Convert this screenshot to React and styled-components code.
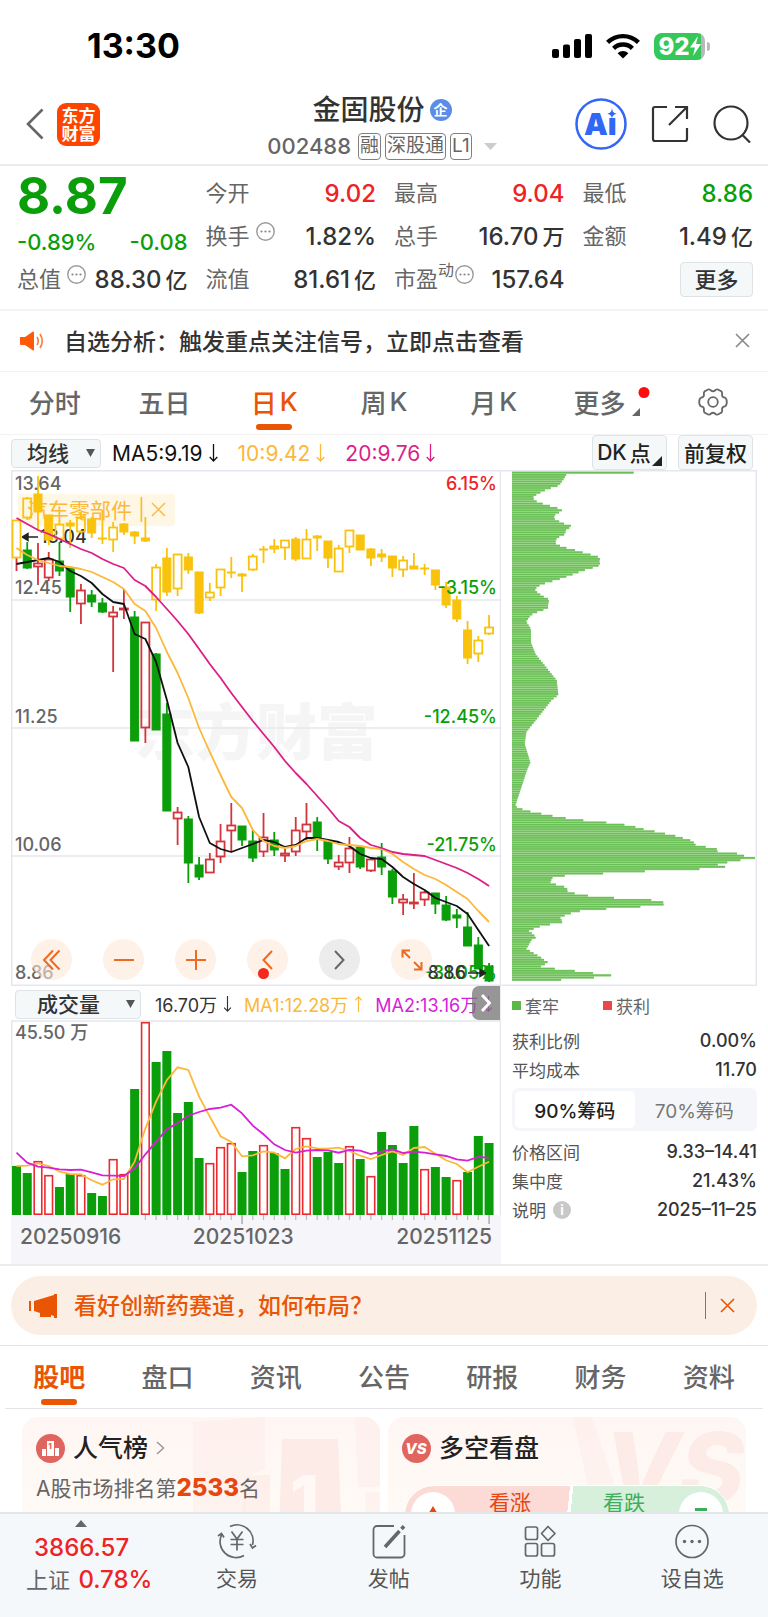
import React from "react";
import styled, { createGlobalStyle, css } from "styled-components";

const Global = createGlobalStyle`
  * { box-sizing: border-box; }
  html, body { margin: 0; background: #fff; }
  body, button, select {
    font-family: Inter, "Noto Sans CJK SC", sans-serif;
    color: #333;
  }
  button, select { border: 0; background: none; padding: 0; margin: 0; font-size: inherit; cursor: pointer; }
  button { display: flex; align-items: center; justify-content: center; }
  a { text-decoration: none; color: inherit; }
  svg { display: block; flex: none; }
`;

const C = {
  orange: "#ea5504",
  red: "#ee2326",
  green: "#0a9e0a",
  grey: "#666",
  ink: "#333",
  gold: "#fbb83a",
  pink: "#dc1f87",
  purple: "#d61fd6",
  line: "#ececee",
  soft: "#f4f8f9",
};

const Shell = styled.div`
  height: 100vh;
  display: flex;
  flex-direction: column;
  overflow: hidden;
`;
const Content = styled.main`
  flex: 1;
  min-height: 0;
  overflow: hidden;
`;

/* ---------- status bar ---------- */
const StatusBar = styled.div`
  height: 84px;
  padding: 8px 58px 0 87px;
  display: flex;
  align-items: center;
  justify-content: space-between;
`;
const Clock = styled.div`
  font-size: 34px;
  line-height: 40px;
  font-weight: 700;
  color: #000;
`;
const StatusIcons = styled.div`
  display: flex;
  align-items: center;
  gap: 13px;
`;
const Battery = styled.div`
  display: flex;
  align-items: center;
  gap: 2px;
`;
const BatteryBody = styled.div`
  width: 51px;
  height: 27px;
  border-radius: 8px;
  background: linear-gradient(90deg, #34c759 92%, #b9b9b9 92%);
  display: flex;
  align-items: center;
  justify-content: center;
  color: #fff;
  font-size: 24px;
  line-height: 27px;
  font-weight: 800;
`;
const BatteryTip = styled.i`
  width: 3px;
  height: 9px;
  border-radius: 0 3px 3px 0;
  background: #b9b9b9;
`;

/* ---------- header ---------- */
const Header = styled.header`
  height: 82px;
  padding: 0 17px 0 24px;
  border-bottom: 2px solid ${C.line};
  display: grid;
  grid-template-columns: 1fr auto 1fr;
  align-items: center;
`;
const HeaderSide = styled.div`
  display: flex;
  align-items: center;
  gap: ${(p) => p.$gap}px;
  justify-content: ${(p) => (p.$end ? "flex-end" : "flex-start")};
`;
const Logo = styled.div`
  width: 43px;
  height: 43px;
  border-radius: 9px;
  background: #ff4400;
  color: #fff;
  font: 700 17px/18px "Noto Sans CJK SC", sans-serif;
  text-align: center;
  padding-top: 3px;
`;
const TitleBlock = styled.div`
  display: flex;
  flex-direction: column;
  align-items: center;
  padding: 8px 11px 0 0;
`;
const TitleRow = styled.h1`
  margin: 0;
  font-size: 28px;
  line-height: 36px;
  font-weight: 500;
  display: flex;
  align-items: center;
  gap: 5px;
`;
const Badge = styled.span`
  width: 22px;
  height: 22px;
  border-radius: 50%;
  background: #5b8de8;
  color: #fff;
  font-size: 14px;
  line-height: 21px;
  text-align: center;
  font-weight: 700;
`;
const CodeRow = styled.div`
  display: flex;
  align-items: center;
  gap: 4px;
  height: 36px;
  font-size: 22px;
  font-weight: 500;
  color: ${C.grey};
  span:first-child { margin-right: 3px; }
  svg { margin-left: 8px; }
`;
const Tag = styled.span`
  border: 1px solid #808080;
  border-radius: 4px;
  height: 27px;
  padding: 0 1px;
  font-size: 19px;
  line-height: 24px;
  font-weight: 400;
`;

/* ---------- quote ---------- */
const Quote = styled.section`
  display: grid;
  grid-template-columns: repeat(4, minmax(0, 1fr));
  grid-auto-rows: 43px;
  column-gap: 18px;
  padding: 6px 15px 8px 17px;
  border-bottom: 2px solid #f3f3f4;
`;
const Price = styled.div`
  font-size: 51px;
  line-height: 48px;
  font-weight: 700;
  color: ${C.green};
`;
const Cell = styled.div`
  display: flex;
  align-items: center;
  justify-content: ${(p) => (p.$end ? "flex-end" : "space-between")};
  font-size: 22px;
  line-height: 32px;
  font-weight: 500;
  white-space: nowrap;
  color: ${(p) => p.$color || C.ink};
  padding-top: ${(p) => (p.$low ? 10 : 0)}px;
`;
const Label = styled.span`
  color: ${C.grey};
  font-weight: 400;
  display: flex;
  align-items: center;
  padding-bottom: 1px;
  svg { margin: -10px 0 0 ${(p) => (p.$tight ? 1 : 6)}px; }
  sup { font-size: 16px; line-height: 16px; margin-top: -18px; }
`;
const Value = styled.span`
  color: ${(p) => p.$color || C.ink};
  font-size: 24px;
  display: flex;
  align-items: center;
  gap: 4px;
`;
const Unit = styled.span`
  font-size: 22px;
`;
const MoreButton = styled.button`
  width: 73px;
  height: 35px;
  padding-bottom: 3px;
  border: 1px solid #dfe3e6;
  border-radius: 4px;
  background: ${C.soft};
  font-size: 22px;
  font-weight: 500;
`;

/* ---------- alert ---------- */
const Alert = styled.section`
  height: 61px;
  border-bottom: 1px solid #f3f3f4;
  padding: 0 18px 1px 20px;
  display: flex;
  align-items: center;
  gap: 20px;
  font-size: 23px;
  font-weight: 500;
  p { margin: 0; flex: 1; padding-bottom: 2px; }
`;

/* ---------- tabs ---------- */
const Tabs = styled.nav`
  display: grid;
  grid-template-columns: repeat(7, minmax(0, 1fr));
  height: 63px;
  border-bottom: 1px solid ${(p) => (p.$inset ? "#e4e4e6" : "#f3f3f4")};
  margin: 0 ${(p) => (p.$inset ? 5 : 0)}px;
`;
const Tab = styled.button`
  position: relative;
  font-size: 26px;
  font-weight: 500;
  color: ${C.grey};
  gap: 3px;
  padding: 0 ${(p) => (p.$marked ? 8 : 0)}px 3px 0;
  ${(p) =>
    p.$active &&
    css`
      color: ${C.orange};
      font-weight: ${p.$heavy ? 700 : 500};
      &::after {
        content: "";
        position: absolute;
        bottom: ${p.$heavy ? 3 : 4}px;
        left: calc(50% - 18px);
        width: 36px;
        height: 6px;
        border-radius: 3px;
        background: ${C.orange};
      }
    `}
`;
const TabMark = styled.svg`
  position: absolute;
  right: 8px;
  top: 15px;
`;

/* ---------- chart area ---------- */
const Toolbar = styled.div`
  height: 35px;
  padding: 0 15px 0 11px;
  display: flex;
  align-items: center;
  font-size: 21px;
`;
const Spacer = styled.div`
  flex: 1;
`;
const SelectBox = styled.label`
  position: relative;
  width: ${(p) => p.$width}px;
  height: 29px;
  margin: 2px 0 0 ${(p) => p.$left || 0}px;
  select {
    appearance: none;
    width: 100%;
    height: 100%;
    border: 1px solid #dde3e6;
    border-radius: 4px;
    background: ${C.soft};
    padding: 0 24px 0 ${(p) => p.$pad}px;
    font-size: 21px;
    line-height: 27px;
    font-weight: 500;
  }
  svg { position: absolute; right: 6px; top: 10px; }
`;
const Reading = styled.span`
  color: ${(p) => p.$color || "#111"};
  margin-left: ${(p) => p.$gap}px;
  padding-top: 1px;
  display: flex;
  align-items: center;
  gap: 6px;
  white-space: nowrap;
`;
const ToolButton = styled.button`
  position: relative;
  height: 35px;
  width: 75px;
  margin-left: 11px;
  border: 1px solid #dde3e6;
  border-radius: 4px;
  background: ${C.soft};
  font-size: 21px;
  font-weight: 500;
  gap: 3px;
  padding: 0 ${(p) => (p.$corner ? 11 : 0)}px 1px 0;
  color: #222;
  svg { position: absolute; right: 4px; bottom: 3px; }
`;
const Charts = styled.section`
  display: grid;
  grid-template-columns: minmax(0, 490fr) minmax(0, 256fr);
  padding: 0 11px;
  border-bottom: 2px solid ${C.line};
`;
const Plot = styled.div`
  position: relative;
  height: ${(p) => p.$height}px;
  > svg { position: relative; width: 100%; height: 100%; }
`;
const Watermark = styled.div`
  position: absolute;
  inset: 0;
  display: flex;
  align-items: center;
  justify-content: center;
  font-size: 61px;
  font-weight: 900;
  color: #f5f5f6;
`;
const Sector = styled.div`
  position: absolute;
  left: 7px;
  top: 24px;
  height: 32px;
  padding: 0 9px 2px;
  background: #fff7e6;
  color: ${C.gold};
  font-size: 21px;
  display: flex;
  align-items: center;
  gap: 6px;
  border-radius: 3px;
`;
const HighMark = styled.div`
  position: absolute;
  left: 11px;
  top: 56px;
  font-size: 18px;
  line-height: 22px;
  font-weight: 500;
  display: flex;
  align-items: center;
  gap: 2px;
`;
const LowMark = styled(HighMark)`
  left: auto;
  right: 15px;
  top: 492px;
`;
const Scale = styled.div`
  position: absolute;
  top: 0;
  bottom: 0;
  ${(p) => (p.$right ? "right: 4px" : "left: 4px")};
`;
const Tick = styled.span`
  position: absolute;
  top: ${(p) => p.$top}px;
  ${(p) => (p.$right ? "right: 0" : "left: 0")};
  font-size: 18px;
  line-height: 22px;
  font-weight: 500;
  white-space: nowrap;
  color: ${(p) => p.$color || C.grey};
`;
const Controls = styled.div`
  position: absolute;
  left: 20px;
  bottom: 6px;
  display: flex;
  gap: 31px;
`;
const Round = styled.button`
  position: relative;
  width: 41px;
  height: 41px;
  border-radius: 50%;
  background: ${(p) => (p.$muted ? "#ececec" : "rgba(251, 232, 217, 0.6)")};
`;
const Dot = styled.i`
  position: absolute;
  left: 11px;
  bottom: 1px;
  width: 11px;
  height: 11px;
  border-radius: 50%;
  background: #f5281e;
`;
const VolumeBar = styled.div`
  position: relative;
  height: 34px;
  display: flex;
  align-items: center;
  font-size: 18px;
  overflow: hidden;
  border-right: 1px solid ${C.line};
`;
const Handle = styled.button`
  position: absolute;
  right: 0;
  top: 0;
  width: 28px;
  height: 34px;
  border-radius: 7px 0 0 7px;
  background: rgba(115, 115, 115, 0.75);
`;
const Axis = styled.div`
  position: relative;
  height: 49px;
  background: #f6f6fa;
  padding: 8px 9px 0;
  display: flex;
  justify-content: space-between;
  font-size: 21px;
  line-height: 28px;
  font-weight: 500;
  color: ${C.grey};
  svg { position: absolute; left: 0; top: 0; width: 100%; height: 9px; }
  span:nth-of-type(2) { margin-right: 31px; }
`;

/* ---------- chip panel ---------- */
const Chips = styled.div`
  min-width: 0;
`;
const ChipInfo = styled.div`
  padding: 4px 0 0 11px;
`;
const Legend = styled.div`
  display: flex;
  gap: 44px;
  height: 30px;
  align-items: center;
  font-size: 17px;
  color: ${C.grey};
  span { display: flex; align-items: center; gap: 4px; }
`;
const Swatch = styled.i`
  width: 9px;
  height: 9px;
  background: ${(p) => p.$color};
`;
const InfoRow = styled.div`
  display: flex;
  justify-content: space-between;
  align-items: center;
  height: 29px;
  font-size: 18px;
  font-weight: 500;
  span { font-size: 17px; font-weight: 400; color: #555; display: flex; align-items: center; gap: 7px; }
`;
const InfoGroup = styled.div`
  padding-top: ${(p) => p.$top}px;
`;
const Segments = styled.div`
  display: grid;
  grid-template-columns: 1fr 1fr;
  height: 43px;
  margin-top: 4px;
  padding: 3px;
  border-radius: 7px;
  background: #f5f6f9;
`;
const Segment = styled.button`
  border-radius: 5px;
  font-size: 19px;
  font-weight: ${(p) => (p.$active ? 500 : 400)};
  color: ${(p) => (p.$active ? "#222" : "#777")};
  background: ${(p) => (p.$active ? "#fff" : "none")};
`;
const InfoDot = styled.i`
  width: 18px;
  height: 18px;
  border-radius: 50%;
  background: #c8c8c8;
  color: #fff;
  font-style: normal;
  font-weight: 700;
  font-size: 13px;
  line-height: 18px;
  text-align: center;
`;

/* ---------- banner ---------- */
const BannerWrap = styled.div`
  padding: 10px 11px;
  border-bottom: 1px solid #e4e4e6;
`;
const Banner = styled.div`
  height: 59px;
  border-radius: 30px;
  background: #fbeee5;
  color: ${C.orange};
  padding: 0 22px 0 18px;
  display: flex;
  align-items: center;
  gap: 17px;
  font-size: 23px;
  font-weight: 500;
  a { flex: 1; padding-bottom: 3px; }
  button { border-left: 1px solid ${C.orange}; padding-left: 14px; height: 27px; }
`;

/* ---------- cards ---------- */
const Cards = styled.div`
  display: grid;
  grid-template-columns: repeat(2, minmax(0, 1fr));
  gap: 8px;
  padding: 8px 22px 0;
`;
const Card = styled.section`
  position: relative;
  height: 150px;
  border-radius: 16px;
  background: linear-gradient(#fef6f3, #fffaf6 60%);
  padding: 13px 14px;
  overflow: hidden;
`;
const CardArt = styled.svg`
  position: absolute;
  right: 0;
  top: 0;
`;
const CardTitle = styled.h2`
  position: relative;
  margin: 0;
  height: 36px;
  display: flex;
  align-items: center;
  gap: 8px;
  font-size: 25px;
  line-height: 34px;
  font-weight: 500;
  color: #222;
`;
const Rank = styled.p`
  position: relative;
  margin: 6px 0 0;
  font-size: 21px;
  line-height: 32px;
  color: ${C.grey};
  b { color: #e6460f; font-size: 24px; font-weight: 800; }
`;
const Votes = styled.div`
  position: relative;
  display: grid;
  grid-template-columns: 1fr 1fr;
  margin: 19px 2px 0;
  height: 60px;
  border-radius: 30px;
  overflow: hidden;
  background: linear-gradient(96deg, #fcdad6 50%, #fff 50% 51%, #d6f0db 51%);
  border: 1px solid #fff;
`;
const Vote = styled.button`
  align-items: flex-start;
  justify-content: ${(p) => (p.$up ? "flex-start" : "flex-end")};
  gap: 34px;
  padding: 6px;
  font-size: 21px;
  line-height: 22px;
  color: ${(p) => (p.$up ? "#e6460f" : "#3fae5c")};
`;
const VoteMark = styled.i`
  width: 44px;
  height: 44px;
  border-radius: 50%;
  background: #fff;
  display: flex;
  justify-content: center;
  padding-top: 14px;
`;

/* ---------- bottom bar ---------- */
const BottomBar = styled.nav`
  flex: none;
  height: 105px;
  border-top: 2px solid #e4e7e9;
  background: #f5f8fa;
  display: grid;
  grid-template-columns: 21fr repeat(4, minmax(0, 19.75fr));
`;
const IndexCell = styled.a`
  position: relative;
  padding: 18px 0 0 26px;
  font-size: 24px;
  line-height: 32px;
  font-weight: 500;
  color: ${C.red};
  white-space: nowrap;
  svg { position: absolute; left: 75px; top: 6px; }
  strong { display: block; font-weight: 500; padding-left: 8px; }
  span { color: ${C.grey}; font-size: 22px; font-weight: 400; margin-right: 2px; }
`;
const NavItem = styled.button`
  flex-direction: column;
  justify-content: flex-start;
  padding-top: 9px;
  gap: 4px;
  font-size: 21px;
  line-height: 32px;
  color: #555;
`;

/* ---------- data: [kind, high, low, top, bottom] in plot units ---------- */
const cx = (i) => 5.5 + i * 10.74;

const CANDLES = [
  ["g", 88, 88, 88, 88], ["g", 72, 99, 80, 98], ["r", 73, 115, 93, 97], ["r", 82, 111, 89, 108],
  ["g", 72, 106, 91, 101], ["g", 97, 142, 98, 127], ["r", 114, 154, 120, 134], ["g", 120, 137, 125, 132],
  ["g", 128, 143, 133, 142], ["r", 136, 202, 142, 147], ["r", 119, 149, 138, 140], ["g", 141, 271, 147, 271],
  ["r", 152, 273, 152, 258], ["g", 183, 260, 184, 260], ["g", 233, 341, 244, 341], ["r", 337, 375, 342, 349],
  ["g", 346, 413, 349, 393], ["g", 387, 410, 395, 407], ["r", 383, 403, 389, 403], ["r", 354, 393, 371, 387],
  ["r", 333, 382, 355, 361], ["g", 356, 376, 356, 370], ["g", 360, 392, 371, 388], ["r", 343, 387, 367, 382],
  ["g", 362, 386, 370, 380], ["r", 379, 392, 383, 386], ["r", 347, 386, 360, 382], ["r", 333, 370, 354, 362],
  ["g", 347, 381, 352, 368], ["g", 370, 394, 371, 389], ["r", 385, 400, 392, 397], ["r", 367, 403, 378, 393],
  ["g", 375, 399, 377, 397], ["r", 388, 402, 389, 401], ["g", 373, 405, 387, 397], ["g", 399, 434, 401, 427],
  ["r", 424, 445, 429, 433], ["r", 403, 439, 432, 434], ["r", 421, 436, 422, 430], ["g", 423, 444, 423, 434],
  ["g", 426, 451, 435, 450], ["g", 439, 458, 445, 448], ["g", 442, 476, 457, 476], ["g", 467, 499, 475, 499],
  ["g", 493, 512, 496, 511],
];

const OVERLAY = [
  ["h", 50, 88, 50, 88], ["h", 27, 50, 28, 48], ["s", 6, 60, 24, 42], ["s", 45, 75, 45, 70],
  ["h", 50, 69, 54, 69], ["s", 50, 78, 53, 56], ["h", 42, 63, 47, 62], ["s", 47, 68, 49, 63],
  ["s", 40, 74, 68, 69], ["h", 52, 82, 57, 70], ["s", 53, 65, 54, 62], ["s", 61, 74, 62, 66],
  ["s", 47, 72, 68, 71], ["h", 94, 141, 97, 130], ["s", 78, 126, 88, 122], ["h", 84, 126, 84, 119],
  ["s", 83, 104, 87, 100], ["s", 102, 144, 102, 143], ["h", 113, 131, 122, 128], ["h", 99, 126, 99, 118],
  ["s", 87, 108, 102, 103], ["s", 103, 122, 104, 106], ["h", 84, 101, 86, 100], ["s", 76, 93, 79, 80],
  ["h", 69, 83, 76, 79], ["h", 70, 90, 70, 78], ["s", 67, 91, 69, 89], ["h", 59, 89, 69, 89],
  ["s", 65, 81, 66, 68], ["s", 71, 98, 71, 88], ["h", 75, 102, 78, 102], ["h", 60, 83, 60, 77],
  ["s", 65, 80, 65, 80], ["s", 78, 96, 79, 88], ["s", 79, 92, 84, 87], ["s", 86, 107, 86, 98],
  ["h", 86, 107, 90, 100], ["s", 83, 99, 96, 99], ["s", 94, 105, 98, 99], ["s", 100, 120, 100, 115],
  ["s", 112, 138, 117, 135], ["s", 126, 152, 130, 149], ["s", 151, 194, 160, 188], ["h", 166, 192, 170, 184],
  ["h", 145, 165, 157, 164],
];

const MA5 = [94, 92, 90, 88, 92, 101, 106, 113, 124, 132, 134, 164, 169, 192, 230, 273, 297, 347, 373, 379, 382, 378, 374, 370, 372, 377, 375, 368, 368, 370, 372, 376, 384, 388, 389, 397, 407, 414, 420, 428, 432, 436, 444, 460, 476];
const MA10 = [78, 85, 90, 93, 96, 97, 99, 102, 107, 112, 119, 134, 141, 158, 182, 203, 228, 258, 282, 305, 327, 338, 360, 371, 376, 378, 376, 371, 369, 371, 374, 375, 376, 378, 379, 384, 392, 399, 405, 409, 415, 422, 429, 441, 452];
const MA20 = [48, 54, 60, 64, 69, 74, 79, 83, 89, 94, 98, 110, 116, 127, 139, 151, 164, 179, 194, 208, 223, 237, 251, 264, 277, 291, 303, 314, 326, 338, 351, 357, 368, 375, 378, 382, 384, 385, 386, 390, 394, 398, 403, 409, 416];

const VOL = [49, 42, -54, -40, 28, 41, -40, 22, 19, -56, -41, 126, -193, 153, 164, 102, 113, 57, -52, -68, -72, 43, 64, -70, 62, 46, -88, -77, 58, 63, 52, -69, 56, -39, 83, 70, 52, 89, -46, 48, 38, -35, 43, 79, 72];
const VMA1 = [453, 452, 445, 453, 470, 477, 478, 496, 509, 493, 492, 440, 340, 260, 195, 157, 165, 245, 305, 364, 381, 424, 421, 409, 413, 430, 402, 394, 400, 401, 398, 408, 422, 432, 420, 409, 420, 399, 396, 416, 436, 447, 472, 455, 440].map((v) => (v - 15) / 3);
const VMA2 = [413, 443, 455, 458, 463, 465, 464, 472, 481, 482, 483, 460, 418, 380, 343, 324, 302, 291, 282, 278, 269, 295, 332, 358, 388, 405, 413, 407, 405, 406, 413, 405, 407, 417, 410, 403, 414, 410, 413, 418, 423, 433, 437, 426, 428].map((v) => (v - 15) / 3);

/* chip distribution outline: [depth, length] */
const CHIP_POINTS = [
  [20, 401], [25, 401], [26, 200], [40, 192], [60, 177], [66, 158], [72, 140], [79, 125], [86, 112], [92, 100], [104, 102], [112, 122], [119, 145], [126, 170], [133, 186], [140, 177], [147, 165], [158, 161], [166, 177], [174, 195], [181, 218], [190, 199], [203, 195], [208, 190], [214, 172], [222, 168], [230, 165], [236, 175], [242, 188], [248, 212], [254, 235], [261, 258], [268, 285], [274, 301], [283, 298], [295, 301], [302, 285], [309, 259], [316, 238], [322, 222], [329, 202], [335, 185], [342, 161], [349, 137], [356, 119], [363, 109], [371, 105], [380, 117], [388, 129], [395, 144], [403, 147], [412, 144], [424, 144], [430, 125], [437, 106], [444, 92], [463, 78], [483, 92], [500, 93], [525, 93], [560, 107], [600, 140], [625, 160], [636, 170], [680, 175], [695, 155], [740, 119], [790, 79], [825, 74], [880, 91], [905, 80], [930, 72], [1010, 45], [1015, 60], [1022, 75], [1028, 108], [1035, 140], [1042, 180], [1049, 226], [1055, 293], [1062, 360], [1069, 401], [1075, 418], [1082, 455], [1088, 482], [1095, 519], [1105, 553], [1114, 584], [1121, 578], [1128, 605], [1135, 652], [1142, 643], [1148, 707], [1155, 726], [1162, 769], [1168, 728], [1175, 685], [1182, 652], [1188, 684], [1195, 607], [1202, 432], [1209, 299], [1216, 177], [1222, 156], [1236, 151], [1243, 174], [1250, 201], [1264, 203], [1270, 240], [1276, 276], [1283, 377], [1289, 489], [1303, 491], [1309, 380], [1316, 281], [1322, 217], [1329, 210], [1336, 182], [1345, 180], [1350, 200], [1357, 164], [1363, 127], [1370, 107], [1378, 86], [1385, 95], [1392, 103], [1398, 108], [1403, 96], [1432, 79], [1438, 90], [1444, 100], [1451, 112], [1458, 124], [1465, 133], [1472, 145], [1478, 133], [1485, 121], [1492, 178], [1498, 235], [1505, 292], [1512, 350], [1519, 245], [1526, 140], [1530, 140],
];
const chipLength = (d) => {
  for (let i = 1; i < CHIP_POINTS.length; i++) {
    const [a, la] = CHIP_POINTS[i - 1];
    const [b, lb] = CHIP_POINTS[i];
    if (d <= b) return (la + ((lb - la) * (d - a)) / (b - a) - 36) / 3;
  }
  return 35;
};
const CHIP_BARS = Array.from({ length: 230 }, (_, i) => {
  const d = 22 + i * 6.555;
  return { y: d / 2.96 - 4.9, w: chipLength(d) };
}).filter((b) => b.y < 512);

const path = (ys) => ys.map((y, i) => `${i ? "L" : "M"}${cx(i).toFixed(1)} ${y.toFixed(1)}`).join("");

function Candle({ i, d, color, hollow, stroke }) {
  const [, hi, lo, top, bot] = d;
  const x = cx(i);
  return (
    <g stroke={color} strokeWidth={stroke}>
      <path d={`M${x} ${hi}V${top}M${x} ${bot}V${lo}`} />
      <rect
        x={x - 4}
        y={top + (hollow ? 0.5 : 0)}
        width="8"
        height={Math.max(bot - top - (hollow ? 1 : 0), 0.5)}
        fill={hollow ? "none" : color}
        strokeWidth={hollow ? stroke : 1}
      />
    </g>
  );
}

function PriceChart() {
  return (
    <svg viewBox="0 0 490 516" preserveAspectRatio="none" fill="none">
      <g stroke="#e6e7ee" strokeWidth="1.5">
        <path d="M0 .8H490M0 130H490M0 258H490M0 386H490M0 515.3H490M.8 0V516M489.5 0V516" />
      </g>
      <path d="M5.5 88V101" stroke="#d2353c" strokeWidth="1.8" />
      {CANDLES.slice(1).map((d, i) => (
        <Candle key={i} i={i + 1} d={d} hollow={d[0] === "r"} stroke={1.8} color={d[0] === "r" ? "#d2353c" : "#0a9e0a"} />
      ))}
      {OVERLAY.map((d, i) => (
        <Candle key={i} i={i} d={d} hollow={d[0] === "h"} stroke={1.8} color="#f9c20c" />
      ))}
      <g strokeWidth="1.8" strokeLinejoin="round">
        <path d={path(MA5)} stroke="#111" />
        <path d={path(MA10)} stroke={C.gold} />
        <path d={path(MA20)} stroke={C.pink} />
      </g>
    </svg>
  );
}

function VolumeChart() {
  return (
    <svg viewBox="0 0 490 195" preserveAspectRatio="none" fill="none">
      <path d="M0 1H490M.8 0V195M489.5 0V195" stroke="#e6e7ee" strokeWidth="1.5" />
      {VOL.map((v, i) =>
        v > 0 ? (
          <rect key={i} x={cx(i) - 4.5} y={195 - v} width="9" height={v} fill="#0a9e0a" />
        ) : (
          <rect key={i} x={cx(i) - 3.8} y={195 + v + 0.7} width="7.6" height={-v - 1.5} stroke="#ea2a2e" strokeWidth="1.6" />
        )
      )}
      <path d={path(VMA1)} stroke="#fbb83a" strokeWidth="1.8" />
      <path d={path(VMA2)} stroke="#d61fd6" strokeWidth="1.8" />
    </svg>
  );
}

function ChipChart() {
  return (
    <svg viewBox="0 0 256 516" preserveAspectRatio="none">
      <path d="M0 .8H255.3V515.3H0" fill="none" stroke="#e6e7ee" strokeWidth="1.5" />
      {CHIP_BARS.map((b, i) => (
        <g key={i}>
          <rect x="11" y={b.y - 1} width={b.w} height="2.3" fill="#84cc70" />
          <rect x="11" y={b.y - 0.5} width={b.w} height="0.9" fill="#66bd52" />
        </g>
      ))}
    </svg>
  );
}

/* ---------- small drawings ---------- */
const More = () => (
  <svg width="19" height="19" viewBox="0 0 19 19" fill="none">
    <circle cx="9.5" cy="9.5" r="8.7" stroke="#999" strokeWidth="1.4" />
    <g fill="#888"><circle cx="5.5" cy="9.5" r="1.1" /><circle cx="9.5" cy="9.5" r="1.1" /><circle cx="13.5" cy="9.5" r="1.1" /></g>
  </svg>
);
const Cross = ({ color, w = 1.6 }) => (
  <svg width="15" height="15" viewBox="0 0 15 15">
    <path d="M1 1 14 14M14 1 1 14" stroke={color} strokeWidth={w} />
  </svg>
);
const Arrow = ({ up, size = 18 }) => (
  <svg width="9" height={size} viewBox="0 0 9 18" fill="none" stroke="currentColor" strokeWidth="1.3">
    {up ? <path d="M4.5 18V1M.7 5 4.5 1 8.3 5" /> : <path d="M4.5 0V17M.7 13 4.5 17 8.3 13" />}
  </svg>
);
const Caret = () => (
  <svg width="9" height="8" viewBox="0 0 9 8"><path d="M0 0H9L4.5 8Z" fill="#555" /></svg>
);
const Corner = ({ size = 10, color = "#222" }) => (
  <svg width={size} height={size} viewBox="0 0 10 10"><path d="M10 0V10H0Z" fill={color} /></svg>
);

const Signal = () => (
  <svg width="40" height="26" viewBox="0 0 40 26" fill="#000">
    <rect x="0" y="16" width="7" height="9" rx="2" /><rect x="11" y="11.5" width="7" height="13.5" rx="2" />
    <rect x="22" y="6" width="7" height="19" rx="2" /><rect x="33" y="1" width="7" height="24" rx="2" />
  </svg>
);
const Wifi = () => (
  <svg width="36" height="26" viewBox="0 0 36 26" fill="none" stroke="#000" strokeWidth="4.4">
    <path d="M2.6 9.4A22 22 0 0 1 33.4 9.4" /><path d="M8.6 15.4A13.4 13.4 0 0 1 27.4 15.4" />
    <path d="M18 25.6 12.6 20.2A7.7 7.7 0 0 1 23.4 20.2Z" fill="#000" stroke="none" />
  </svg>
);

const turnover = [["换手", "1.82%"], ["总手", "16.70", "万"], ["金额", "1.49", "亿"]];

export default function App() {
  return (
    <Shell>
      <Global />
      <Content>
        <StatusBar>
          <Clock>13:30</Clock>
          <StatusIcons>
            <Signal />
            <Wifi />
            <Battery>
              <BatteryBody>
                92
                <svg width="11" height="20" viewBox="0 0 11 20"><path d="M8 0 0 11.5H5L3 20 11 8H6Z" fill="#fff" /></svg>
              </BatteryBody>
              <BatteryTip />
            </Battery>
          </StatusIcons>
        </StatusBar>

        <Header>
          <HeaderSide $gap={12}>
            <button aria-label="返回">
              <svg width="21" height="32" viewBox="0 0 21 32"><path d="M18.5 1.5 4 16 18.5 30.5" fill="none" stroke="#666" strokeWidth="2.6" /></svg>
            </button>
            <Logo>东方<br />财富</Logo>
          </HeaderSide>
          <TitleBlock>
            <TitleRow>金固股份<Badge>企</Badge></TitleRow>
            <CodeRow>
              <span>002488</span>
              <Tag>融</Tag><Tag>深股通</Tag><Tag>L1</Tag>
              <svg width="13" height="7" viewBox="0 0 13 7"><path d="M0 0H13L6.5 7Z" fill="#ccc" /></svg>
            </CodeRow>
          </TitleBlock>
          <HeaderSide $end $gap={24}>
            <button aria-label="AI">
              <svg width="52" height="52" viewBox="0 0 52 52">
                <circle cx="26" cy="26" r="24.5" fill="none" stroke="#3266f5" strokeWidth="2.5" />
                <text x="9" y="37" fontSize="30" fontWeight="900" fontFamily="Inter, sans-serif" fill="#3266f5">Aı</text>
                <path d="M37 10C37.6 14 38.5 15 42 15.7 38.5 16.5 37.6 17.5 37 21 36.4 17.5 35.5 16.5 32 15.7 35.5 15 36.4 14 37 10Z" fill="#3266f5" />
              </svg>
            </button>
            <button aria-label="分享">
              <svg width="38" height="38" viewBox="0 0 38 38" fill="none" stroke="#333" strokeWidth="2.2">
                <path d="M16 2H4a2 2 0 0 0-2 2V34a2 2 0 0 0 2 2H34a2 2 0 0 0 2-2V23M24 2H36V14M36 2 18 20" />
              </svg>
            </button>
            <button aria-label="搜索">
              <svg width="38" height="38" viewBox="0 0 38 38" fill="none" stroke="#333" strokeWidth="2.2">
                <circle cx="18" cy="18" r="16.5" /><path d="M29.5 30 37 37.5" />
              </svg>
            </button>
          </HeaderSide>
        </Header>

        <Quote>
          <Price>8.87</Price>
          <Cell><Label>今开</Label><Value $color={C.red}>9.02</Value></Cell>
          <Cell><Label>最高</Label><Value $color={C.red}>9.04</Value></Cell>
          <Cell><Label>最低</Label><Value $color={C.green}>8.86</Value></Cell>
          <Cell $color={C.green} $low><span>-0.89%</span><span>-0.08</span></Cell>
          {turnover.map(([k, v, unit], i) => (
            <Cell key={k}><Label>{k}{i === 0 && <More />}</Label><Value>{v}{unit && <Unit>{unit}</Unit>}</Value></Cell>
          ))}
          <Cell><Label>总值<More /></Label><Value>88.30<Unit>亿</Unit></Value></Cell>
          <Cell><Label>流值</Label><Value>81.61<Unit>亿</Unit></Value></Cell>
          <Cell><Label $tight>市盈<sup>动</sup><More /></Label><Value>157.64</Value></Cell>
          <Cell $end><MoreButton>更多</MoreButton></Cell>
        </Quote>

        <Alert>
          <svg width="24" height="22" viewBox="0 0 24 22" fill="none">
            <path d="M0 7H5L13 1.5A1 1 0 0 1 14 2V20A1 1 0 0 1 13 20.5L5 15H1A1 1 0 0 1 0 14Z" fill="#ff5a0a" />
            <path d="M17 7Q19.5 11 17 15M20 4Q24.5 11 20 18" stroke="#ff7a3a" strokeWidth="1.6" />
          </svg>
          <p>自选分析：触发重点关注信号，立即点击查看</p>
          <button aria-label="关闭提示"><Cross color="#888" /></button>
        </Alert>

        <Tabs>
          <Tab>分时</Tab>
          <Tab>五日</Tab>
          <Tab $active><span>日</span>K</Tab>
          <Tab><span>周</span>K</Tab>
          <Tab><span>月</span>K</Tab>
          <Tab $marked>
            更多
            <TabMark width="18" height="30" viewBox="0 0 18 30">
              <circle cx="12" cy="5.5" r="5.5" fill="#fb0d0d" /><path d="M8 21V29H0Z" fill="#666" />
            </TabMark>
          </Tab>
          <Tab aria-label="设置">
            <svg width="30" height="28" viewBox="0 0 30 28" fill="none" stroke="#666" strokeWidth="1.8">
              <path d="M10 1.5Q12 1 13 2.5 15 4 17 2.5 18 1 20 1.5L23.5 3.5Q24.5 5 24 7 24.2 9.400 27 9.700 28.8 10.5 28.8 14 28.8 17.5 27 18.3 24.2 18.6 24 21 24.5 23 23.5 24.5L20 26.5Q18 27 17 25.5 15 24 13 25.5 12 27 10 26.5L6.5 24.5Q5.5 23 6 21 5.8 18.6 3 18.3 1.2 17.5 1.2 14 1.2 10.5 3 9.700 5.8 9.400 6 7 5.5 5 6.5 3.5Z" />
              <circle cx="15" cy="14" r="4.8" />
            </svg>
          </Tab>
        </Tabs>

        <Toolbar>
          <SelectBox $width={90} $pad={15}>
            <select aria-label="主图指标"><option>均线</option></select>
            <Caret />
          </SelectBox>
          <Reading $gap={11}>MA5:9.19<Arrow /></Reading>
          <Reading $gap={20} $color={C.gold}>10:9.42<Arrow /></Reading>
          <Reading $gap={20} $color={C.pink}>20:9.76<Arrow /></Reading>
          <Spacer />
          <ToolButton $corner><span>DK</span>点<Corner /></ToolButton>
          <ToolButton>前复权</ToolButton>
        </Toolbar>

        <Charts>
          <div>
            <Plot $height={516}>
              <Watermark aria-hidden="true">东方财富</Watermark>
              <Sector>汽车零部件<span>|</span><Cross color={C.gold} w={1.4} /></Sector>
              <HighMark>
                <svg width="16" height="10" viewBox="0 0 16 10"><path d="M4 5H16M0 5 6 1.5V8.5Z" stroke="#222" strokeWidth="1.4" fill="#222" /></svg>
                13.04
              </HighMark>
              <PriceChart />
              <Scale>
                <Tick $top={3}>13.64</Tick>
                <Tick $top={107}>12.45</Tick>
                <Tick $top={236}>11.25</Tick>
                <Tick $top={364}>10.06</Tick>
                <Tick $top={492}>8.86</Tick>
              </Scale>
              <Scale $right>
                <Tick $right $top={3} $color={C.red}>6.15%</Tick>
                <Tick $right $top={107} $color={C.green}>-3.15%</Tick>
                <Tick $right $top={236} $color={C.green}>-12.45%</Tick>
                <Tick $right $top={364} $color={C.green}>-21.75%</Tick>
                <Tick $right $top={492} $color={C.green}>-31.05%</Tick>
              </Scale>
              <LowMark>
                8.86
                <svg width="18" height="10" viewBox="0 0 18 10"><path d="M0 5H12M18 5 12 1.5V8.5Z" stroke="#222" strokeWidth="1.4" fill="#222" /></svg>
              </LowMark>
              <Controls>
                <Round aria-label="最早">
                  <svg width="19" height="22" viewBox="0 0 19 22" fill="none" stroke="#ee6a22" strokeWidth="2"><path d="M11 1.5 2 11 11 20.5M17.5 1.5 8.5 11 17.5 20.5" /></svg>
                </Round>
                <Round aria-label="缩小">
                  <svg width="20" height="20" viewBox="0 0 20 20" stroke="#ee6a22" strokeWidth="2"><path d="M0 10H20" /></svg>
                </Round>
                <Round aria-label="放大">
                  <svg width="20" height="20" viewBox="0 0 20 20" stroke="#ee6a22" strokeWidth="2"><path d="M0 10H20M10 0V20" /></svg>
                </Round>
                <Round aria-label="左移">
                  <svg width="11" height="20" viewBox="0 0 11 20" fill="none" stroke="#ee6a22" strokeWidth="2"><path d="M10 1 1.5 10 10 19" /></svg>
                  <Dot />
                </Round>
                <Round $muted aria-label="右移">
                  <svg width="11" height="20" viewBox="0 0 11 20" fill="none" stroke="#666" strokeWidth="2"><path d="M1 1 9.5 10 1 19" /></svg>
                </Round>
                <Round aria-label="全屏">
                  <svg width="22" height="22" viewBox="0 0 22 22" fill="none" stroke="#ee6a22" strokeWidth="2"><path d="M1.5 8.5V1.5H9M1.5 1.5 9 9M20.5 13V20.5H13M20.5 20.5 13 13" /></svg>
                </Round>
              </Controls>
            </Plot>
            <VolumeBar>
              <SelectBox $width={126} $pad={21} $left={4}>
                <select aria-label="副图指标"><option>成交量</option></select>
                <Caret />
              </SelectBox>
              <Reading $gap={14} $color="#333">16.70万<Arrow size={16} /></Reading>
              <Reading $gap={12} $color={C.gold}>MA1:12.28万<Arrow up size={16} /></Reading>
              <Reading $gap={12} $color={C.purple}>MA2:13.16万<Arrow size={16} /></Reading>
              <Handle aria-label="更多指标">
                <svg width="10" height="18" viewBox="0 0 10 18" fill="none" stroke="#fff" strokeWidth="2.8"><path d="M1 1 8.5 9 1 17" /></svg>
              </Handle>
            </VolumeBar>
            <Plot $height={195}>
              <VolumeChart />
              <Scale><Tick $top={2}>45.50 万</Tick></Scale>
            </Plot>
            <Axis>
              <svg viewBox="0 0 490 9" preserveAspectRatio="none">
                {VOL.map((_, i) => i > 11 && (
                  <path key={i} d={`M${cx(i)} 0V${i === 21 || i === 44 ? 9 : 5}`} stroke={i === 21 || i === 44 ? "#999" : "#bbb"} strokeWidth="1.2" />
                ))}
              </svg>
              <span>20250916</span><span>20251023</span><span>20251125</span>
            </Axis>
          </div>

          <Chips>
            <Plot $height={516}><ChipChart /></Plot>
            <ChipInfo>
              <Legend>
                <span><Swatch $color="#5cb947" />套牢</span>
                <span><Swatch $color="#e8474b" />获利</span>
              </Legend>
              <InfoGroup $top={6}>
                <InfoRow><span>获利比例</span>0.00%</InfoRow>
                <InfoRow><span>平均成本</span>11.70</InfoRow>
              </InfoGroup>
              <Segments>
                <Segment $active>90%筹码</Segment>
                <Segment>70%筹码</Segment>
              </Segments>
              <InfoGroup $top={6}>
                <InfoRow><span>价格区间</span>9.33–14.41</InfoRow>
                <InfoRow><span>集中度</span>21.43%</InfoRow>
                <InfoRow><span>说明<InfoDot>i</InfoDot></span>2025–11–25</InfoRow>
              </InfoGroup>
            </ChipInfo>
          </Chips>
        </Charts>

        <BannerWrap>
          <Banner>
            <svg width="28" height="24" viewBox="0 0 28 24" fill="#ea5504">
              <path d="M0 7H2V17H0ZM5 7 25 1V0H28V24H25V22L22 21V23H11V19L5 17Z" />
            </svg>
            <a href="#topic">看好创新药赛道，如何布局？</a>
            <button aria-label="关闭"><Cross color={C.orange} /></button>
          </Banner>
        </BannerWrap>

        <Tabs $inset>
          {["股吧", "盘口", "资讯", "公告", "研报", "财务", "资料"].map((t, i) => (
            <Tab key={t} $active={i === 0} $heavy={i === 0}>{t}</Tab>
          ))}
        </Tabs>

        <Cards>
          <Card>
            <CardArt width="190" height="150" viewBox="0 0 190 150" fill="#fdebe7" aria-hidden="true">
              <path d="M3 5 75 0V52L56 60V150H3Z" opacity=".5" />
              <path d="M55 58H80V150H48Z" opacity=".7" />
              <path d="M92 22H148L153 150H88Z" />
              <path d="M165 0H190V70H168ZM175 75H190V150H175Z" opacity=".5" />
              <text x="100" y="106" fontSize="66" fontWeight="800" fontFamily="Inter, sans-serif" fill="#fff8f5">1</text>
            </CardArt>
            <CardTitle>
              <svg width="29" height="29" viewBox="0 0 29 29">
                <circle cx="14.5" cy="14.5" r="14.5" fill="#e0655f" />
                <path d="M6 15H10V22H6ZM11 7H18V22H11ZM19 14H23V22H19Z" fill="#fff" />
                <text x="14" y="15" textAnchor="middle" fontSize="8" fontWeight="800" fontFamily="Inter, sans-serif" fill="#e0655f">1</text>
              </svg>
              人气榜
              <svg width="9" height="14" viewBox="0 0 9 14" fill="none" stroke="#999" strokeWidth="1.5"><path d="M1 1 7.5 7 1 13" /></svg>
            </CardTitle>
            <Rank>A股市场排名第<b>2533</b>名</Rank>
          </Card>
          <Card>
            <CardArt width="190" height="150" viewBox="0 0 190 150" fill="#fdebe7" aria-hidden="true">
              <path d="M17 0H36L62 78H34Z" opacity=".5" />
              <text x="48" y="86" fontSize="98" fontWeight="800" fontStyle="italic" fontFamily="Inter, sans-serif">VS</text>
            </CardArt>
            <CardTitle>
              <svg width="29" height="29" viewBox="0 0 29 29">
                <circle cx="14.5" cy="14.5" r="14.5" fill="#e0655f" />
                <text x="14" y="20" textAnchor="middle" fontSize="15" fontWeight="800" fontStyle="italic" fontFamily="Inter, sans-serif" fill="#fff">VS</text>
              </svg>
              多空看盘
            </CardTitle>
            <Votes>
              <Vote $up>
                <VoteMark><svg width="12" height="12" viewBox="0 0 12 12"><path d="M6 0 12 10H0Z" fill="#e6460f" /></svg></VoteMark>
                看涨
              </Vote>
              <Vote>
                看跌
                <VoteMark><svg width="14" height="12" viewBox="0 0 14 12"><path d="M1 2H13V5H1Z" fill="#3fae5c" /></svg></VoteMark>
              </Vote>
            </Votes>
          </Card>
        </Cards>
      </Content>

      <BottomBar>
        <IndexCell href="#index">
          <svg width="12" height="7" viewBox="0 0 12 7"><path d="M6 0 12 7H0Z" fill="#666" /></svg>
          <strong>3866.57</strong>
          <span>上证</span> 0.78%
        </IndexCell>
        <NavItem>
          <svg width="40" height="36" viewBox="0 0 40 36" fill="none" stroke="#666" strokeWidth="1.7">
            <path d="M13 3.5A16 16 0 0 1 35.5 22M27 32.5A16 16 0 0 1 4.5 12M1 13 4.5 10.5 7 14.5M39 22.5 35.5 25 33 21" />
            <path d="M14.5 8.5 20 16 25.5 8.5M20 16V27.5M13.5 16.5H26.5M13.5 21.5H26.5" />
          </svg>
          交易
        </NavItem>
        <NavItem>
          <svg width="36" height="36" viewBox="0 0 36 36" fill="none" stroke="#666" strokeWidth="1.8">
            <path d="M23 3H6A3.5 3.5 0 0 0 2.5 6.5V31A3.5 3.5 0 0 0 6 34.5H30A3.5 3.5 0 0 0 33.5 31V12" />
            <path d="M14 24 28.5 8" strokeWidth="3.6" /><path d="M30.5 6 33 3.3" strokeWidth="3.6" />
          </svg>
          发帖
        </NavItem>
        <NavItem>
          <svg width="34" height="36" viewBox="0 0 34 36" fill="none" stroke="#666" strokeWidth="1.7">
            <rect x="2.5" y="4" width="12" height="12.5" rx="2" /><rect x="2.5" y="20.5" width="12" height="12.5" rx="2" /><rect x="18.5" y="20.5" width="13" height="12.5" rx="2" />
            <path d="M25 3.5 32 10.5 25 17.5 18.5 10.5Z" strokeLinejoin="round" />
          </svg>
          功能
        </NavItem>
        <NavItem>
          <svg width="36" height="36" viewBox="0 0 36 36" fill="none">
            <circle cx="18" cy="18.5" r="16" stroke="#666" strokeWidth="1.7" />
            <g fill="#666"><circle cx="10.5" cy="18.5" r="1.7" /><circle cx="18" cy="18.5" r="1.7" /><circle cx="25.5" cy="18.5" r="1.7" /></g>
          </svg>
          设自选
        </NavItem>
      </BottomBar>
    </Shell>
  );
}
